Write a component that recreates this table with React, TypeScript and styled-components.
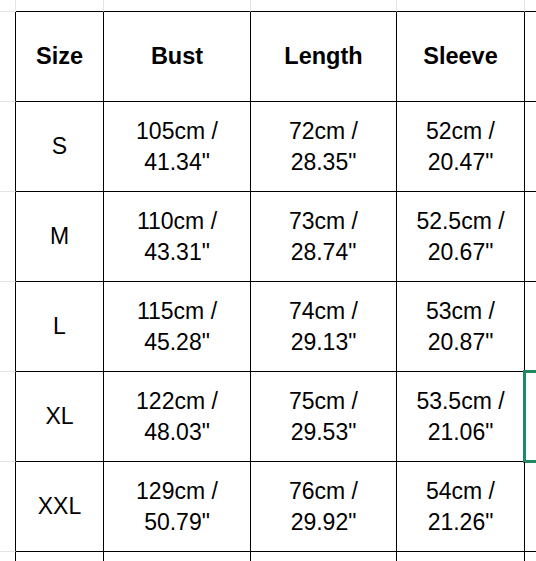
import React from "react";
import styled, { createGlobalStyle, css } from "styled-components";

const GlobalStyle = createGlobalStyle`
  html, body {
    margin: 0;
    padding: 0;
    background: #ffffff;
    overflow: hidden;
  }
  body {
    font-family: "Liberation Sans", Arial, sans-serif;
    color: #000000;
  }
`;

const GRID = "#e3e3e3";
const LINE = "#000000";
const SELECT = "#1f8a62";

const Sheet = styled.div`
  display: grid;
  grid-template-columns: 16px 88px 147px 146px 128px 11px;
  grid-template-rows: 12px repeat(6, 90px) 9px;
  width: 536px;
  height: 561px;
  overflow: hidden;
`;

const Cell = styled.div<{
  $ghostRight?: boolean;
  $ghostBottom?: boolean;
  $bold?: boolean;
  $selected?: boolean;
  $edgeRight?: boolean;
  $edgeBottom?: boolean;
}>`
  box-sizing: border-box;
  position: relative;
  display: flex;
  align-items: center;
  justify-content: center;
  text-align: center;
  font-size: ${(p) => (p.$bold ? "23.5px" : "23px")};
  line-height: 31px;
  font-weight: ${(p) => (p.$bold ? 700 : 400)};
  border-right: ${(p) =>
    p.$edgeRight ? "none" : `1px solid ${p.$ghostRight ? GRID : LINE}`};
  border-bottom: ${(p) =>
    p.$edgeBottom ? "none" : `1px solid ${p.$ghostBottom ? GRID : LINE}`};
  white-space: pre-line;
  ${(p) =>
    p.$selected &&
    css`
      &::after {
        content: "";
        position: absolute;
        top: -2px;
        left: -2px;
        right: -6px;
        bottom: -2px;
        border: 3px solid ${SELECT};
        pointer-events: none;
      }
    `}
`;

const headers = ["Size", "Bust", "Length", "Sleeve", ""];

const rows: string[][] = [
  ["S", "105cm /\n41.34\"", "72cm /\n28.35\"", "52cm /\n20.47\"", ""],
  ["M", "110cm /\n43.31\"", "73cm /\n28.74\"", "52.5cm /\n20.67\"", ""],
  ["L", "115cm /\n45.28\"", "74cm /\n29.13\"", "53cm /\n20.87\"", ""],
  ["XL", "122cm /\n48.03\"", "75cm /\n29.53\"", "53.5cm /\n21.06\"", ""],
  ["XXL", "129cm /\n50.79\"", "76cm /\n29.92\"", "54cm /\n21.26\"", ""],
  ["", "", "", "", ""],
];

const lastCol = headers.length - 1;
const lastRow = rows.length - 1;

export default function App() {
  return (
    <>
      <GlobalStyle />
      <Sheet>
        {/* top partial spreadsheet row */}
        <Cell $ghostRight $ghostBottom />
        {headers.map((_, i) => (
          <Cell key={`t${i}`} $ghostRight $edgeRight={i === lastCol} />
        ))}
        {/* header row */}
        <Cell $ghostBottom />
        {headers.map((h, i) => (
          <Cell key={`h${i}`} $bold $edgeRight={i === lastCol}>
            {h}
          </Cell>
        ))}
        {rows.map((r, ri) => (
          <React.Fragment key={`r${ri}`}>
            <Cell $ghostBottom $edgeBottom={ri === lastRow} />
            {r.map((c, ci) => (
              <Cell
                key={`c${ri}-${ci}`}
                $selected={ri === 3 && ci === lastCol}
                $edgeRight={ci === lastCol}
                $edgeBottom={ri === lastRow}
              >
                {c}
              </Cell>
            ))}
          </React.Fragment>
        ))}
      </Sheet>
    </>
  );
}
